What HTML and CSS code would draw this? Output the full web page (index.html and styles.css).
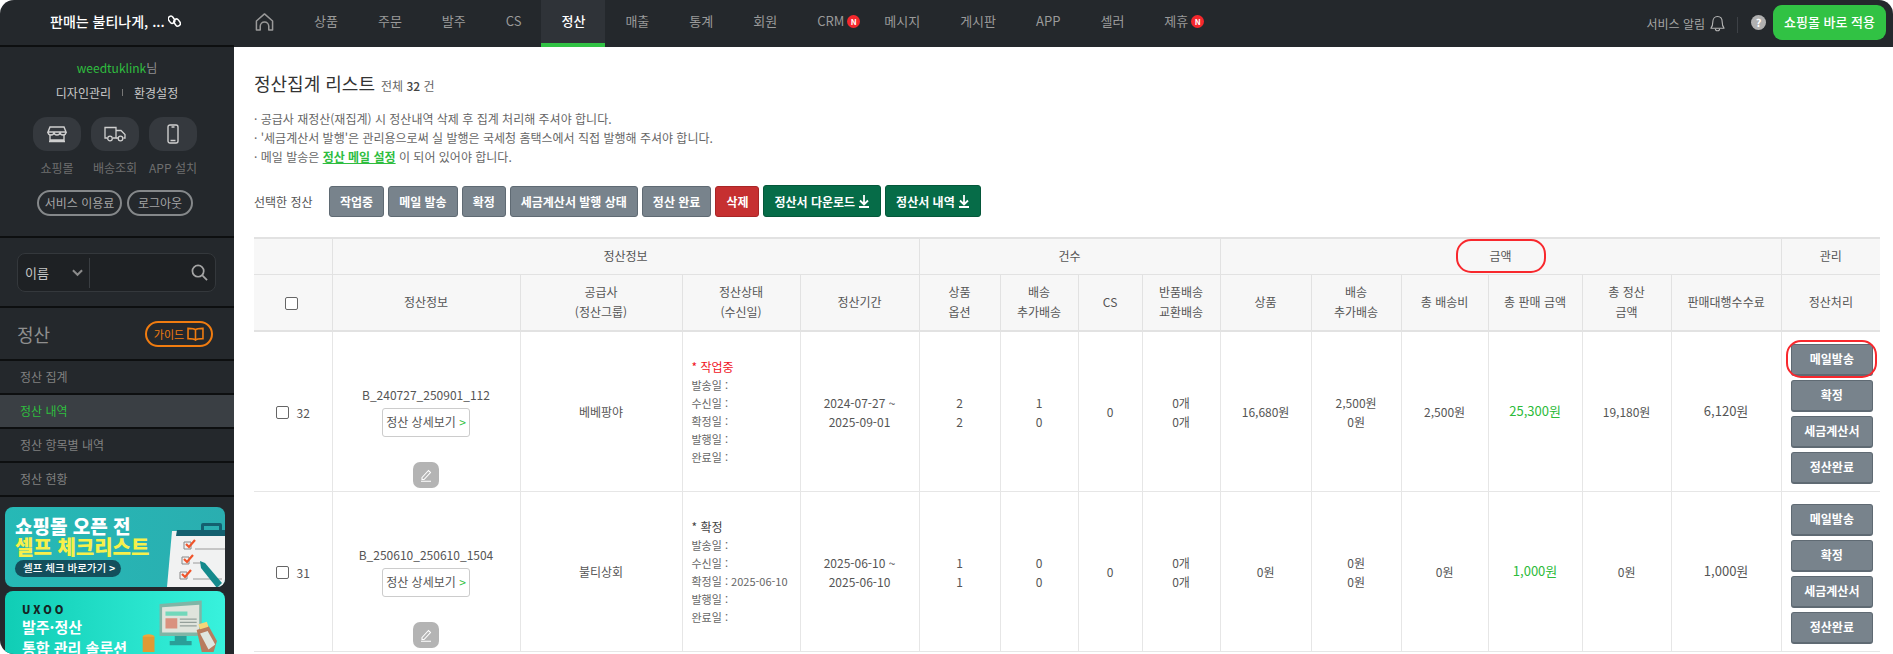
FILE: index.html
```html
<!DOCTYPE html>
<html lang="ko">
<head>
    <meta charset="UTF-8">
    <title>정산집계 리스트</title>
    <link rel="stylesheet" href="styles.css">
</head>
<body>
<div class="app">
    <header class="top-bar">
        <div class="brand">
            <span>판매는 불티나게, ...</span>
            <svg class="brand-link" viewBox="0 0 14 14" width="13" height="14" fill="none" stroke="#fff" stroke-width="1.6"><rect x="1" y="1.5" width="5.5" height="8" rx="2.7" transform="rotate(-35 4 5.5)"/><rect x="7" y="4.5" width="5.5" height="8" rx="2.7" transform="rotate(-35 10 8.5)"/></svg>
        </div>
        <nav class="nav">
            <a class="nav-item nav-home"><svg viewBox="0 0 20 20" width="19" height="20" fill="none" stroke="#9a9a9a" stroke-width="1.6"><path d="M1.5 18.5V9L10 1.5 18.5 9v9.5h-4v-4a4.5 4.5 0 0 0-9 0v4z" stroke-linejoin="round"/></svg></a>
            <a class="nav-item">상품</a>
            <a class="nav-item">주문</a>
            <a class="nav-item">발주</a>
            <a class="nav-item">CS</a>
            <a class="nav-item active">정산</a>
            <a class="nav-item">매출</a>
            <a class="nav-item">통계</a>
            <a class="nav-item">회원</a>
            <a class="nav-item">CRM<span class="new-badge">N</span></a>
            <a class="nav-item">메시지</a>
            <a class="nav-item">게시판</a>
            <a class="nav-item">APP</a>
            <a class="nav-item">셀러</a>
            <a class="nav-item">제휴<span class="new-badge">N</span></a>
        </nav>
        <div class="top-right">
            <span class="alarm">서비스 알림</span>
            <svg viewBox="0 0 16 18" width="15" height="17" fill="none" stroke="#b5b5b5" stroke-width="1.2"><path d="M1 14c1.5-1.5 2-3 2-6.500C3 4 5 1.500 8 1.500s5 2.500 5 6c0 3.500.5 5 2 6.500z" stroke-linejoin="round"/><path d="M5.800 14.500a2.200 2.200 0 0 0 4.400 0"/></svg>
            <span class="top-sep"></span>
            <span class="help">?</span>
            <a class="apply-btn">쇼핑몰 바로 적용</a>
        </div>
    </header>

    <aside class="sidebar">
        <section class="profile">
            <div class="user"><b>weedtuklink</b>님</div>
            <div class="profile-links"><span>디자인관리</span><i></i><span>환경설정</span></div>
            <div class="quick">
                <div class="quick-item">
                    <span class="quick-tile"><svg viewBox="0 0 20 18" width="20" height="18" fill="none" stroke="#cfcfcf" stroke-width="1.4"><path d="M3 2h14l2 5H1z"/><path d="M1 7a3 3 0 0 0 6 0 3 3 0 0 0 6 0 3 3 0 0 0 6 0"/><path d="M3 10v5h14v-5M2 16.500h16"/></svg></span>
                    <span>쇼핑몰</span>
                </div>
                <div class="quick-item">
                    <span class="quick-tile"><svg viewBox="0 0 22 16" width="22" height="16" fill="none" stroke="#cfcfcf" stroke-width="1.300"><path d="M3 12H1V1.500h11V12H9"/><path d="M12 4.500h5l4 4V12h-1.500M12 12h2"/><circle cx="6" cy="12.500" r="2.300"/><circle cx="16.500" cy="12.500" r="2.300"/></svg></span>
                    <span>배송조회</span>
                </div>
                <div class="quick-item">
                    <span class="quick-tile"><svg viewBox="0 0 12 20" width="12" height="20" fill="none" stroke="#cfcfcf" stroke-width="1.400"><rect x="1" y="1" width="10" height="18" rx="2"/><path d="M4.500 3h3M3.500 16.500h5"/></svg></span>
                    <span>APP 설치</span>
                </div>
            </div>
            <div class="service-btns">
                <a class="pill-btn wide">서비스 이용료</a>
                <a class="pill-btn narrow">로그아웃</a>
            </div>
        </section>

        <section class="search-wrap">
            <div class="search-box">
                <span class="search-type">이름<svg viewBox="0 0 12 8" width="11" height="8" fill="none" stroke="#8b8b8b" stroke-width="2.200"><path d="M1 1l5 5 5-5"/></svg></span>
                <svg class="search-icon" viewBox="0 0 18 18" width="17" height="17" fill="none" stroke="#a5a5a5" stroke-width="1.800"><circle cx="7.500" cy="7.500" r="6"/><path d="M12 12l5 5"/></svg>
            </div>
        </section>

        <section class="side-head">
            <h2>정산</h2>
            <a class="guide-btn">가이드<svg viewBox="0 0 18 15" width="17" height="14" fill="none" stroke="#f07c10" stroke-width="1.700"><path d="M9 3v11M9 3C8 1.800 6 1.500 1 1.500v11c5 0 7 .3 8 1.500 1-1.200 3-1.500 8-1.500v-11C12 1.500 10 1.800 9 3z"/></svg></a>
        </section>

        <ul class="side-menu">
            <li>정산 집계</li>
            <li class="current">정산 내역</li>
            <li>정산 항목별 내역</li>
            <li>정산 현황</li>
        </ul>

        <div class="banner banner-check">
            <p class="bn-line1">쇼핑몰 오픈 전</p>
            <p class="bn-line2">셀프 체크리스트</p>
            <span class="bn-pill">셀프 체크 바로가기 <b>&gt;</b></span>
            <svg class="bn-art" viewBox="0 0 62 80" width="62" height="80">
                <path d="M9 24h53v56H4z" fill="#f1f2f2"/>
                <path d="M14 23h48v6H13z" fill="#14606f"/>
                <path d="M38 23v-5q0-2 2-2h17q2 0 2 2v5h-3v-4H41v4z" fill="#14606f"/>
                <g fill="none" stroke-width="1">
                    <path d="M32 42h30M30 56h8M30 72h29" stroke="#9a9a9a"/>
                    <path d="M21 35h7v7h-7zM19 50h7v7h-7zM17 65h7v7h-7z" stroke="#888"/>
                </g>
                <path d="M23 37l3 3 6-7M21 52l3 3 6-7M19 67l3 3 6-7" fill="none" stroke="#f0552b" stroke-width="2.200"/>
                <path d="M37 54l5 2 17 20-5 5-16-20z" fill="#148a8c"/>
            </svg>
        </div>
        <div class="banner banner-solution">
            <p class="bn-logo">UXOO</p>
            <p class="bn-title">발주·정산</p>
            <p class="bn-title">통합 관리 솔루션</p>
            <svg class="bn-art2" viewBox="0 0 100 64" width="85" height="54">
                <path d="M24 7l50-4v42H24z" fill="#7fb5a6"/>
                <path d="M27 11l44-3v33H27z" fill="#dfe4dc"/>
                <path d="M31 16h26v5H31z" fill="#72d8bb"/>
                <path d="M31 24h14v12H31z" fill="#d9917f"/>
                <path d="M48 25h20M48 29h20M48 33h20" stroke="#94a09a" stroke-width="1.500"/>
                <path d="M42 45h14v6h6v5H36v-5h6z" fill="#2a9f98"/>
                <path d="M68 38l14-5 10 18-4 13H74z" fill="#b87c5e"/>
                <path d="M72 42l9-3 9 16-8 6z" fill="#dfe6df"/>
                <path d="M70 31l10-3 2 6-10 3z" fill="#f4d67a"/>
                <ellipse cx="11" cy="46" rx="7" ry="3" fill="#eea73d"/>
                <path d="M4 46h14v18H4z" fill="#e09a34"/>
            </svg>
        </div>
    </aside>

    <main class="content">
        <div class="title-row">
            <h1>정산집계 리스트</h1>
            <span class="total">전체 <b>32</b> 건</span>
        </div>
        <ul class="notes">
            <li>· 공급사 재정산(재집계) 시 정산내역 삭제 후 집계 처리해 주셔야 합니다.</li>
            <li>· '세금계산서 발행'은 관리용으로써 실 발행은 국세청 홈택스에서 직접 발행해 주셔야 합니다.</li>
            <li>· 메일 발송은 <a class="note-link">정산 메일 설정</a> 이 되어 있어야 합니다.</li>
        </ul>
        <div class="actions">
            <span class="actions-label">선택한 정산</span>
            <a class="btn btn-gray">작업중</a>
            <a class="btn btn-gray">메일 발송</a>
            <a class="btn btn-gray">확정</a>
            <a class="btn btn-gray">세금계산서 발행 상태</a>
            <a class="btn btn-gray">정산 완료</a>
            <a class="btn btn-red">삭제</a>
            <a class="btn btn-green">정산서 다운로드<svg viewBox="0 0 12 14" width="12" height="14" fill="none" stroke="#fff" stroke-width="1.800"><path d="M6 1v9M2 6.500L6 10.500l4-4M1 13h10"/></svg></a>
            <a class="btn btn-green">정산서 내역<svg viewBox="0 0 12 14" width="12" height="14" fill="none" stroke="#fff" stroke-width="1.800"><path d="M6 1v9M2 6.500L6 10.500l4-4M1 13h10"/></svg></a>
        </div>

        <table class="list">
            <colgroup>
                <col class="c-check"><col class="c-info"><col class="c-supplier"><col class="c-status"><col class="c-period">
                <col class="c-goods"><col class="c-ship"><col class="c-cs"><col class="c-return">
                <col class="c-amount"><col class="c-amount2"><col class="c-shipfee"><col class="c-sale"><col class="c-settle"><col class="c-fee"><col class="c-manage">
            </colgroup>
            <thead>
                <tr class="head-group">
                    <th></th>
                    <th colspan="4">정산정보</th>
                    <th colspan="4">건수</th>
                    <th colspan="6"><span class="circled circled-head">금액</span></th>
                    <th>관리</th>
                </tr>
                <tr class="head-cols">
                    <th><input type="checkbox" class="check"></th>
                    <th>정산정보</th>
                    <th>공급사<br>(정산그룹)</th>
                    <th>정산상태<br>(수신일)</th>
                    <th>정산기간</th>
                    <th>상품<br>옵션</th>
                    <th>배송<br>추가배송</th>
                    <th>CS</th>
                    <th>반품배송<br>교환배송</th>
                    <th>상품</th>
                    <th>배송<br>추가배송</th>
                    <th>총 배송비</th>
                    <th>총 판매 금액</th>
                    <th>총 정산<br>금액</th>
                    <th>판매대행수수료</th>
                    <th>정산처리</th>
                </tr>
            </thead>
            <tbody>
                <tr>
                    <td><input type="checkbox" class="check"><span class="num">32</span></td>
                    <td class="info-cell">
                        <div class="code">B_240727_250901_112</div>
                        <a class="detail-btn">정산 상세보기 <em>&gt;</em></a>
                        <a class="edit-btn"><svg viewBox="0 0 14 14" width="14" height="14" fill="none" stroke="#fff" stroke-width="1.100"><path d="M3 9.500L9.500 2.500l2 2L5 11.500H3zM2 13.200h10"/></svg></a>
                    </td>
                    <td>베베팡야</td>
                    <td class="status-cell">
                        <div class="status-name work">* 작업중</div>
                        <div>발송일 :</div><div>수신일 :</div><div>확정일 :</div><div>발행일 :</div><div>완료일 :</div>
                    </td>
                    <td>2024-07-27 ~<br>2025-09-01</td>
                    <td>2<br>2</td>
                    <td>1<br>0</td>
                    <td>0</td>
                    <td>0개<br>0개</td>
                    <td>16,680원</td>
                    <td>2,500원<br>0원</td>
                    <td>2,500원</td>
                    <td class="money sale">25,300원</td>
                    <td>19,180원</td>
                    <td class="money">6,120원</td>
                    <td class="manage-cell">
                        <a class="act-btn"><span class="circled circled-btn">메일발송</span></a>
                        <a class="act-btn">확정</a>
                        <a class="act-btn">세금계산서</a>
                        <a class="act-btn">정산완료</a>
                    </td>
                </tr>
                <tr>
                    <td><input type="checkbox" class="check"><span class="num">31</span></td>
                    <td class="info-cell">
                        <div class="code">B_250610_250610_1504</div>
                        <a class="detail-btn">정산 상세보기 <em>&gt;</em></a>
                        <a class="edit-btn"><svg viewBox="0 0 14 14" width="14" height="14" fill="none" stroke="#fff" stroke-width="1.100"><path d="M3 9.500L9.500 2.500l2 2L5 11.500H3zM2 13.200h10"/></svg></a>
                    </td>
                    <td>불티상회</td>
                    <td class="status-cell">
                        <div class="status-name">* 확정</div>
                        <div>발송일 :</div><div>수신일 :</div><div>확정일 : 2025-06-10</div><div>발행일 :</div><div>완료일 :</div>
                    </td>
                    <td>2025-06-10 ~<br>2025-06-10</td>
                    <td>1<br>1</td>
                    <td>0<br>0</td>
                    <td>0</td>
                    <td>0개<br>0개</td>
                    <td>0원</td>
                    <td>0원<br>0원</td>
                    <td>0원</td>
                    <td class="money sale">1,000원</td>
                    <td>0원</td>
                    <td class="money">1,000원</td>
                    <td class="manage-cell">
                        <a class="act-btn">메일발송</a>
                        <a class="act-btn">확정</a>
                        <a class="act-btn">세금계산서</a>
                        <a class="act-btn">정산완료</a>
                    </td>
                </tr>
            </tbody>
        </table>
    </main>
</div>
</body>
</html>
```

FILE: styles.css
```css
* {
    box-sizing: border-box;
}
html, body {
    margin: 0;
    height: 100%;
    background: #fff;
    overflow: hidden;
}
body {
    font-family: "Noto Sans CJK KR", "Noto Sans", sans-serif;
    font-size: 12px;
    color: #555;
}
p, ul, h1, h2 {
    margin: 0;
    padding: 0;
}
ul {
    list-style: none;
}
.app {
    display: grid;
    grid-template-columns: 234px 1fr;
    grid-template-rows: 47px 607px;
    height: 654px;
    overflow: hidden;
    border-radius: 14px 14px 0 14px;
}

/* top bar */
.top-bar {
    grid-column: 1 / 3;
    display: flex;
    align-items: stretch;
    background: #24282c;
    color: #9a9a9a;
}
.brand {
    width: 234px;
    flex: none;
    display: flex;
    align-items: center;
    gap: 3px;
    padding: 0 0 3px 50px;
    color: #fff;
    font-size: 14px;
    font-weight: 500;
    border-bottom: 2px solid #0d0f10;
}
.nav {
    display: flex;
}
.nav-item {
    position: relative;
    display: flex;
    align-items: center;
    padding: 0 20px 2px;
    font-size: 13px;
    border-bottom: 4px solid transparent;
}
.nav-item.nav-home {
    width: 60px;
    padding: 0 0 0 21px;
}
.nav-item.active {
    background: #2f3338;
    color: #fff;
    font-weight: 500;
    border-bottom-color: #31c244;
}
.new-badge {
    position: absolute;
    right: 4px;
    top: 15px;
    width: 13px;
    height: 13px;
    border-radius: 50%;
    background: #f5282d;
    color: #fff;
    font-size: 8px;
    font-weight: 700;
    line-height: 13px;
    text-align: center;
}
.top-right {
    margin-left: auto;
    display: flex;
    align-items: center;
    padding-right: 7px;
}
.alarm {
    font-size: 12px;
    color: #a5a5a5;
    margin-right: 5px;
}
.top-sep {
    width: 1px;
    height: 16px;
    background: #3d4146;
    margin: 2px 13px 0 12px;
}
.help {
    width: 15px;
    height: 15px;
    margin-bottom: 3px;
    border-radius: 50%;
    background: #b0b0b0;
    color: #fff;
    font-size: 11px;
    font-weight: 700;
    line-height: 15px;
    text-align: center;
}
.apply-btn {
    width: 113px;
    height: 35px;
    margin: 0 0 2px 7px;
    border-radius: 9px;
    background: #31c244;
    color: #fff;
    font-size: 13px;
    font-weight: 500;
    line-height: 34px;
    text-align: center;
}

/* sidebar */
.sidebar {
    background: #24282c;
    overflow: hidden;
    color: #8a8a8a;
}
.profile {
    height: 191px;
    padding-top: 12px;
    border-bottom: 2px solid #0d0f10;
}
.user {
    text-align: center;
    height: 18px;
    line-height: 18px;
    color: #8f8f8f;
}
.user b {
    color: #2fbd3f;
    font-weight: 400;
}
.profile-links {
    display: flex;
    justify-content: center;
    align-items: center;
    gap: 11px;
    margin-top: 6px;
    height: 18px;
    color: #c9c9c9;
}
.profile-links i {
    width: 1px;
    height: 7px;
    background: #777;
}
.quick {
    display: flex;
    padding-left: 28px;
    margin-top: 16px;
}
.quick-item {
    width: 58px;
    display: flex;
    flex-direction: column;
    align-items: center;
    gap: 8px;
    color: #6f6f6f;
    line-height: 18px;
}
.quick-tile {
    width: 48px;
    height: 34px;
    border-radius: 14px;
    background: #35393e;
    display: flex;
    align-items: center;
    justify-content: center;
}
.service-btns {
    display: flex;
    gap: 5px;
    margin: 13px 0 0 37px;
}
.pill-btn {
    height: 26px;
    border: 2px solid #85888a;
    border-radius: 13px;
    color: #a5a5a5;
    line-height: 21px;
    text-align: center;
}
.pill-btn.wide {
    width: 85px;
}
.pill-btn.narrow {
    width: 66px;
}
.search-wrap {
    height: 70px;
    padding: 15px 18px 0 17px;
    border-bottom: 2px solid #0d0f10;
}
.search-box {
    height: 39px;
    background: #1e2124;
    border: 1px solid #34383c;
    border-radius: 8px;
    display: flex;
    align-items: center;
    justify-content: space-between;
    padding: 0 7px;
}
.search-type {
    width: 65px;
    height: 30px;
    display: flex;
    align-items: center;
    justify-content: space-between;
    padding-right: 6px;
    border-right: 1px solid #3a3e42;
    color: #c5c5c5;
    font-size: 13px;
    margin-right: 0;
}
.side-head {
    height: 53px;
    display: flex;
    align-items: center;
    justify-content: space-between;
    padding: 0 21px 0 17px;
    border-bottom: 2px solid #0d0f10;
}
.side-head h2 {
    font-size: 18px;
    font-weight: 400;
    color: #8f8f8f;
}
.guide-btn {
    width: 68px;
    height: 26px;
    border: 2px solid #f07c10;
    border-radius: 13px;
    display: flex;
    align-items: center;
    justify-content: center;
    gap: 3px;
    color: #f07c10;
    font-size: 11px;
}
.side-menu li {
    height: 34px;
    line-height: 31px;
    padding-left: 20px;
    border-bottom: 2px solid #0d0f10;
    color: #808080;
}
.side-menu li.current {
    background: #3a3f44;
    color: #2fbd3f;
}
.banner {
    position: relative;
    width: 220px;
    margin: 0 0 4px 5px;
    border-radius: 8px;
    overflow: hidden;
}
.banner-check {
    height: 80px;
    margin-top: 10px;
    padding: 8px 0 0 10px;
    background: linear-gradient(90deg, #26b9b6, #2aaeb0);
}
.bn-line1 {
    font-size: 19px;
    font-weight: 900;
    line-height: 21px;
    color: #fff;
}
.bn-line2 {
    font-size: 20px;
    font-weight: 900;
    line-height: 22px;
    color: #f7f04a;
}
.bn-pill {
    display: inline-block;
    height: 17px;
    margin-top: 2px;
    padding: 0 6px 0 8px;
    border-radius: 9px;
    background: #134f5c;
    color: #fff;
    font-size: 10.500px;
    font-weight: 500;
    line-height: 16px;
}
.bn-art {
    position: absolute;
    right: 0;
    bottom: 0;
}
.banner-solution {
    height: 70px;
    padding: 11px 0 0 17px;
    background: linear-gradient(90deg, #10cdb5, #38f2dd);
}
.bn-logo {
    font-size: 11px;
    font-weight: 900;
    letter-spacing: 3px;
    line-height: 14px;
    color: #152524;
}
.bn-title {
    font-size: 15px;
    font-weight: 700;
    line-height: 21px;
    color: #fff;
}
.bn-art2 {
    position: absolute;
    left: 134px;
    top: 7px;
}

/* content */
.content {
    padding: 24px 13px 0 20px;
    overflow: hidden;
    background: #fff;
}
.title-row {
    display: flex;
    align-items: baseline;
    gap: 6px;
    height: 24px;
}
.title-row h1 {
    font-size: 18px;
    font-weight: 400;
    color: #333;
    line-height: 24px;
}
.total {
    color: #666;
}
.total b {
    color: #444;
    font-weight: 500;
}
.notes {
    margin-top: 14px;
    line-height: 19px;
    color: #666;
}
.note-link {
    color: #2fbd3f;
    font-weight: 700;
    text-decoration: underline;
}
.actions {
    display: flex;
    align-items: center;
    gap: 4px;
    margin-top: 19px;
    height: 32px;
}
.actions-label {
    width: 71px;
}
.btn {
    height: 31px;
    padding: 0 10px;
    display: flex;
    align-items: center;
    gap: 3px;
    border-radius: 3px;
    color: #fff;
    font-weight: 700;
    white-space: nowrap;
}
.btn-gray {
    background: #78838c;
    border: 1px solid #5f6a73;
}
.btn-red {
    background: #c63031;
    border: 1px solid #a92526;
}
.btn-green {
    height: 32px;
    background: #066c48;
    border: 1px solid #05573a;
}

/* table */
.list {
    width: 1626px;
    margin-top: 20px;
    border-collapse: collapse;
    table-layout: fixed;
    text-align: center;
}
.c-check { width: 78px; }
.c-info { width: 188px; }
.c-supplier { width: 162px; }
.c-status { width: 118px; }
.c-period { width: 119px; }
.c-goods { width: 81px; }
.c-ship { width: 78px; }
.c-cs { width: 64px; }
.c-return { width: 78px; }
.c-amount { width: 91px; }
.c-amount2 { width: 90px; }
.c-shipfee { width: 87px; }
.c-sale { width: 94px; }
.c-settle { width: 89px; }
.c-fee { width: 110px; }
.c-manage { width: 99px; }
.list th, .list td {
    border: 1px solid #e6e6e6;
    padding: 0;
    font-weight: 400;
    line-height: 19px;
}
.list tr > :first-child {
    border-left: 0;
}
.list tr > :last-child {
    border-right: 0;
}
.list th {
    background: #f7f7f7;
    color: #555;
}
.list thead th {
    border-color: #e2e2e2;
    line-height: 20px;
}
.head-group th {
    height: 36px;
    border-top-width: 2px;
}
.head-cols th {
    height: 57px;
    border-bottom-width: 2px;
}
.head-cols .check {
    margin-right: 2px;
}
.list tbody tr {
    height: 160px;
}
.check {
    appearance: none;
    width: 13px;
    height: 13px;
    margin: 0;
    border: 1px solid #666;
    border-radius: 2px;
    background: #fff;
    vertical-align: middle;
}
.num {
    margin-left: 8px;
    vertical-align: middle;
}
.list td.info-cell {
    vertical-align: top;
    padding-top: 53px;
}
.code {
    height: 20px;
}
.detail-btn {
    display: block;
    width: 88px;
    height: 29px;
    margin: 3px auto 0;
    border: 1px solid #ccc;
    border-radius: 3px;
    line-height: 26px;
    white-space: nowrap;
}
.detail-btn em {
    font-style: normal;
    color: #31c244;
}
.edit-btn {
    display: flex;
    align-items: center;
    justify-content: center;
    width: 26px;
    height: 26px;
    margin: 25px auto 0;
    border-radius: 7px;
    background: #b4b4b4;
}
.list td.status-cell {
    text-align: left;
    padding-left: 9px;
    font-size: 11px;
    line-height: 18px;
    color: #666;
}
.status-name {
    font-size: 12px;
    line-height: 19px;
    color: #444;
}
.status-name.work {
    color: #f0141e;
}
.list td.money {
    font-size: 13px;
    padding-bottom: 2px;
}
.list td.sale {
    color: #2dbb3a;
}
.list td.manage-cell {
    padding: 12px 7px 7px 9px;
    vertical-align: top;
}
.act-btn {
    display: block;
    height: 32px;
    margin-bottom: 4px;
    border: 1px solid #5f6a73;
    border-bottom-width: 2px;
    border-radius: 3px;
    background: #78838c;
    color: #fff;
    font-weight: 700;
    line-height: 27px;
}
.act-btn:last-child {
    margin-bottom: 0;
}
.circled {
    position: relative;
    display: inline-block;
}
.circled::after {
    content: "";
    position: absolute;
    border: 2px solid #f8282d;
    border-radius: 15px;
}
.circled-head::after {
    top: -7px;
    bottom: -7px;
    left: -34px;
    right: -34px;
}
.circled-btn {
    display: block;
}
.circled-btn::after {
    top: -5px;
    bottom: -6px;
    left: -6px;
    right: -5px;
}
```
